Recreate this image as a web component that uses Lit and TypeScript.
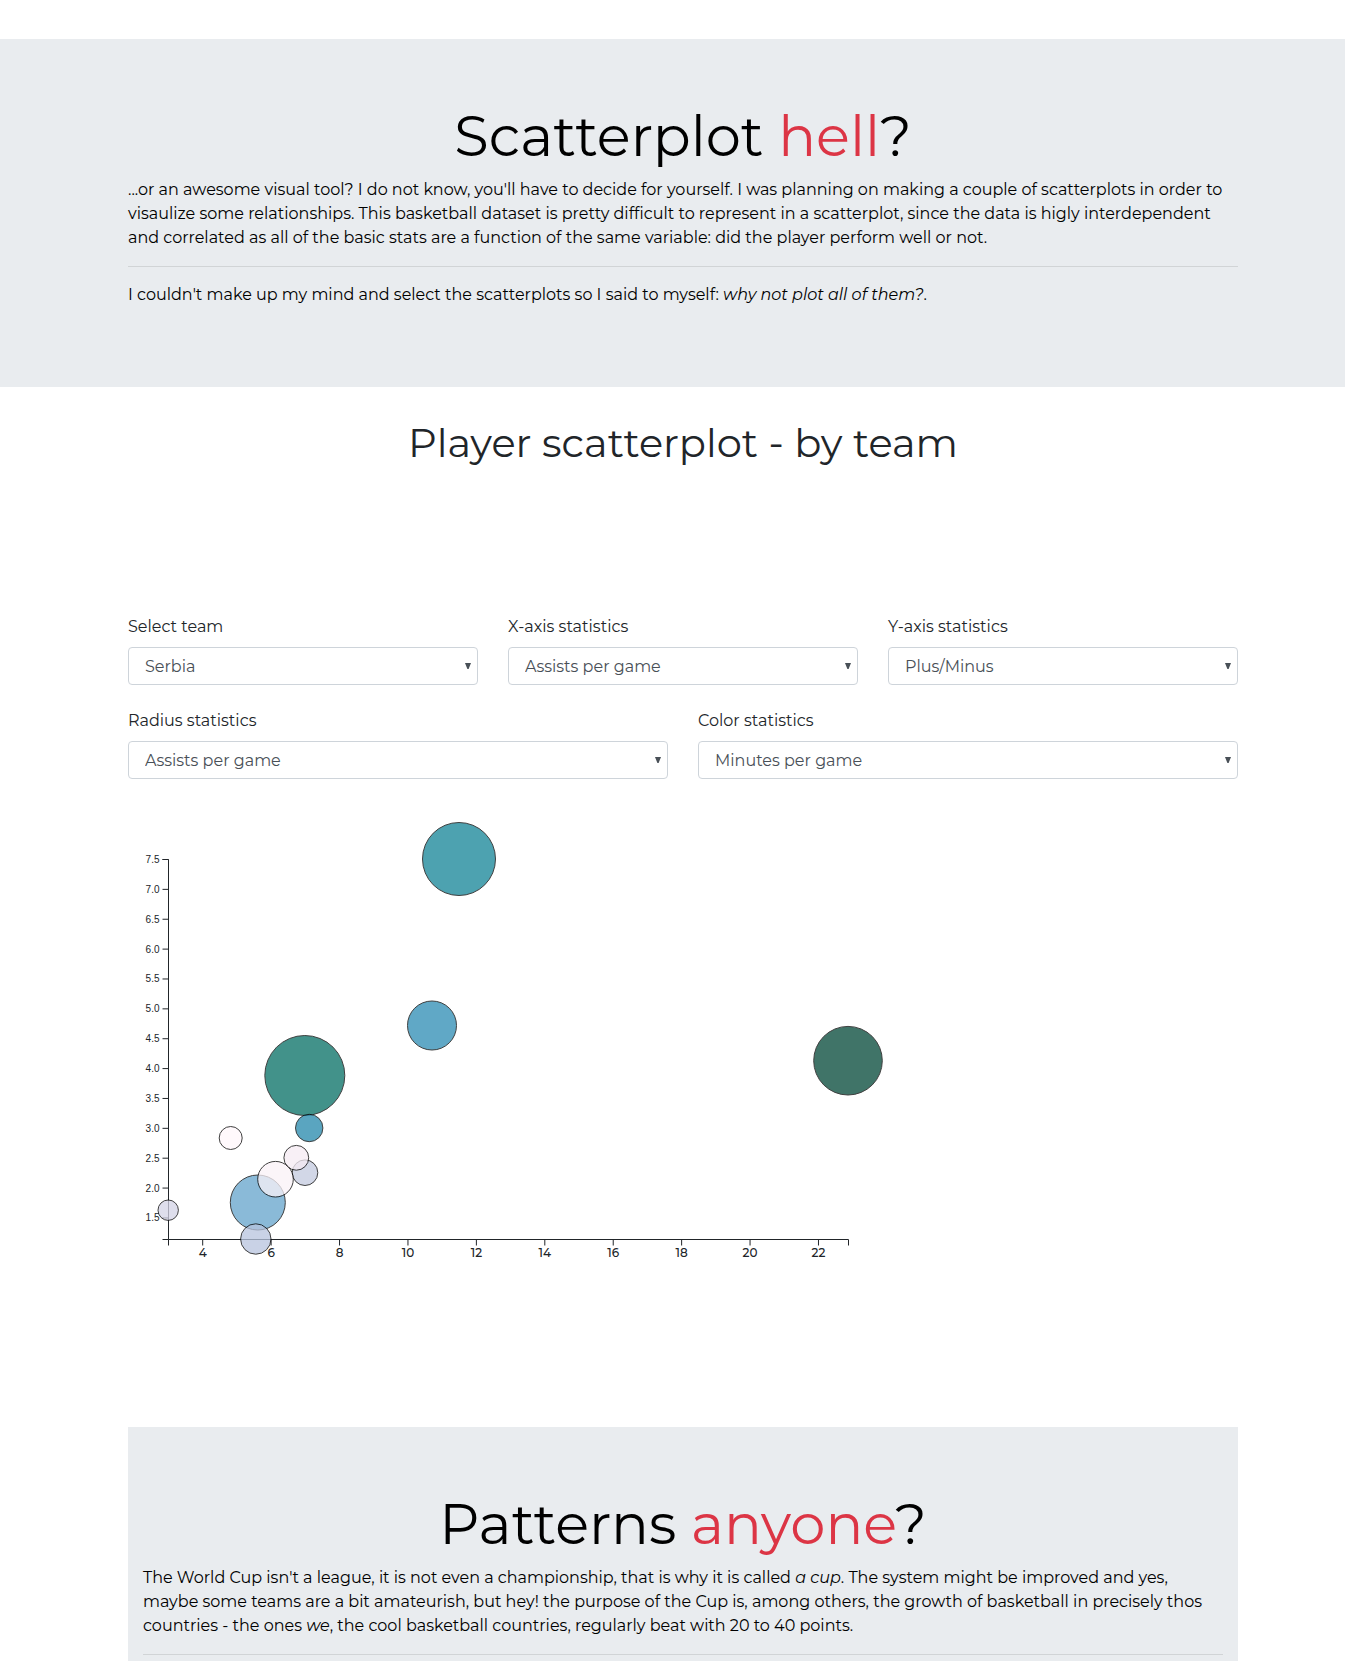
import { LitElement, html, svg, css } from "lit";
import { customElement, property } from "lit/decorators.js";

interface Bubble {
  cx: number;
  cy: number;
  r: number;
  fill: string;
}

const AXIS = { left: 40.5, right: 720.5, top: 50.5, bottom: 430.5 };

const Y_TICKS = Array.from({ length: 13 }, (_, i) => ({
  label: (7.5 - i * 0.5).toFixed(1),
  y: AXIS.top + i * 29.87,
}));

const X_TICKS = Array.from({ length: 10 }, (_, i) => ({
  label: String(4 + i * 2),
  x: 74.7 + i * 68.42,
}));

const BUBBLES: Bubble[] = [
  { cx: 331, cy: 50, r: 36.5, fill: "#128396" },
  { cx: 304, cy: 216.5, r: 24.5, fill: "#2b8cb3" },
  { cx: 720, cy: 251.7, r: 34.3, fill: "#014636" },
  { cx: 176.8, cy: 266.5, r: 40, fill: "#046e63" },
  { cx: 181.2, cy: 319, r: 13.7, fill: "#2388ac" },
  { cx: 102.7, cy: 329, r: 11.5, fill: "#fff7fb" },
  { cx: 177, cy: 363.7, r: 12.8, fill: "#c3cae0" },
  { cx: 168.3, cy: 348.8, r: 12.4, fill: "#f6ecf4" },
  { cx: 129.8, cy: 393.5, r: 27.5, fill: "#63a3cb" },
  { cx: 147.5, cy: 370.2, r: 17.8, fill: "#faf2f8" },
  { cx: 127.8, cy: 430, r: 15.2, fill: "#b7c4de" },
  { cx: 40.2, cy: 401.2, r: 10.2, fill: "#d4d3e6" },
];

@customElement("scatter-plot")
export class ScatterPlot extends LitElement {
  static styles = css`
    :host {
      display: block;
    }
    .chart {
      display: block;
      overflow: visible;
    }
    .axis {
      fill: none;
      stroke: #212529;
    }
    .x-label {
      font: 500 12px Montserrat, Inter, sans-serif;
      fill: #212529;
      text-anchor: middle;
    }
    .y-label {
      font: 10px "Liberation Sans", Arial, sans-serif;
      fill: #212529;
      text-anchor: end;
    }
    .bubble {
      stroke: #000;
      stroke-width: 1px;
      opacity: 0.75;
    }
  `;

  render() {
    const { left, right, top, bottom } = AXIS;
    return html`
      <svg class="chart" width="800" height="500" role="img" aria-label="Player scatterplot">
        <path class="axis" d="M${left} ${bottom + 6}V${bottom}H${right}V${bottom + 6}" />
        <path class="axis" d="M${left - 6} ${top}H${left}V${bottom}H${left - 6}" />
        ${X_TICKS.map(
          (t) => svg`
            <line class="axis" x1=${t.x} x2=${t.x} y1=${bottom} y2=${bottom + 6} />
            <text class="x-label" x=${t.x} y=${bottom + 17.5}>${t.label}</text>`
        )}
        ${Y_TICKS.map(
          (t) => svg`
            <line class="axis" x1=${left - 6} x2=${left} y1=${t.y} y2=${t.y} />
            <text class="y-label" x=${left - 9} y=${t.y + 3.5}>${t.label}</text>`
        )}
        ${BUBBLES.map(
          (b) => svg`<circle class="bubble" cx=${b.cx} cy=${b.cy} r=${b.r} fill=${b.fill} />`
        )}
      </svg>
    `;
  }
}

@customElement("stat-select")
export class StatSelect extends LitElement {
  @property() label = "";
  @property({ attribute: false }) options: string[] = [];

  static styles = css`
    :host {
      display: block;
      min-width: 0;
    }
    .label {
      display: block;
      margin-bottom: 8px;
    }
    .control {
      position: relative;
    }
    .select {
      appearance: none;
      display: block;
      box-sizing: border-box;
      width: 100%;
      height: 38px;
      padding: 2px 24px 0 16px;
      border: 1px solid #ced4da;
      border-radius: 4px;
      background: #fff;
      color: #495057;
      font: inherit;
    }
    .arrow {
      position: absolute;
      right: 7px;
      top: 16px;
      pointer-events: none;
      fill: #495057;
    }
  `;

  render() {
    return html`
      <label class="label" for="field">${this.label}</label>
      <div class="control">
        <select class="select" id="field">
          ${this.options.map((o) => html`<option>${o}</option>`)}
        </select>
        <svg class="arrow" width="6" height="6" viewBox="0 0 6 6" aria-hidden="true">
          <path d="M0 0H6L3.6 6H2.4Z" />
        </svg>
      </div>
    `;
  }
}

const STATS = ["Assists per game", "Minutes per game", "Plus/Minus", "Points per game"];
const startingWith = (first: string) => [first, ...STATS.filter((s) => s !== first)];

@customElement("app-root")
export class AppRoot extends LitElement {
  static styles = css`
    :host {
      display: block;
      overflow-x: hidden;
      padding-top: 39px;
      background: #fff;
      color: #212529;
      font: 400 16px/24px Montserrat, Inter, sans-serif;
    }
    .container {
      padding: 0 107px 0 128px;
    }
    .jumbotron {
      padding-top: 64px;
      background: #e9ecef;
      color: #000;
    }
    .intro {
      padding-bottom: 64px;
    }
    .patterns {
      padding: 64px 15px 6px;
    }
    .title {
      margin: 0 0 8px;
      font-size: 56px;
      font-weight: 400;
      line-height: 67px;
      text-align: center;
    }
    .accent {
      color: #dc3545;
    }
    .text {
      margin: 0 0 16px;
      white-space: nowrap;
    }
    .rule {
      height: 1px;
      margin: 0 0 16px;
      border: 0;
      background: rgba(0, 0, 0, 0.1);
    }
    .patterns .rule {
      margin: 0;
    }
    .subtitle {
      margin: 32px 0 148px;
      font-size: 40px;
      font-weight: 400;
      line-height: 48px;
      text-align: center;
    }
    .fields {
      display: grid;
      gap: 30px;
      margin-bottom: 24px;
    }
    .three {
      grid-template-columns: repeat(3, 1fr);
    }
    .two {
      grid-template-columns: repeat(2, 1fr);
    }
    .plot {
      margin: 30px 0 118px;
    }
  `;

  render() {
    return html`
      <header class="jumbotron intro">
        <div class="container">
          <h1 class="title">Scatterplot <span class="accent">hell</span>?</h1>
          <p class="text">
            ...or an awesome visual tool? I do not know, you'll have to decide for yourself. I was planning on making a couple of scatterplots in order to<br />
            visaulize some relationships. This basketball dataset is pretty difficult to represent in a scatterplot, since the data is higly interdependent<br />
            and correlated as all of the basic stats are a function of the same variable: did the player perform well or not.
          </p>
          <hr class="rule" />
          <p class="text">
            I couldn't make up my mind and select the scatterplots so I said to myself: <i>why not plot all of them?</i>.
          </p>
        </div>
      </header>
      <main class="container">
        <h2 class="subtitle">Player scatterplot - by team</h2>
        <div class="fields three">
          <stat-select label="Select team" .options=${["Serbia"]}></stat-select>
          <stat-select label="X-axis statistics" .options=${startingWith("Assists per game")}></stat-select>
          <stat-select label="Y-axis statistics" .options=${startingWith("Plus/Minus")}></stat-select>
        </div>
        <div class="fields two">
          <stat-select label="Radius statistics" .options=${startingWith("Assists per game")}></stat-select>
          <stat-select label="Color statistics" .options=${startingWith("Minutes per game")}></stat-select>
        </div>
        <scatter-plot class="plot"></scatter-plot>
        <section class="jumbotron patterns">
          <h1 class="title">Patterns <span class="accent">anyone</span>?</h1>
          <p class="text">
            The World Cup isn't a league, it is not even a championship, that is why it is called <i>a cup</i>. The system might be improved and yes,<br />
            maybe some teams are a bit amateurish, but hey! the purpose of the Cup is, among others, the growth of basketball in precisely thos<br />
            countries - the ones <i>we</i>, the cool basketball countries, regularly beat with 20 to 40 points.
          </p>
          <hr class="rule" />
        </section>
      </main>
    `;
  }
}
